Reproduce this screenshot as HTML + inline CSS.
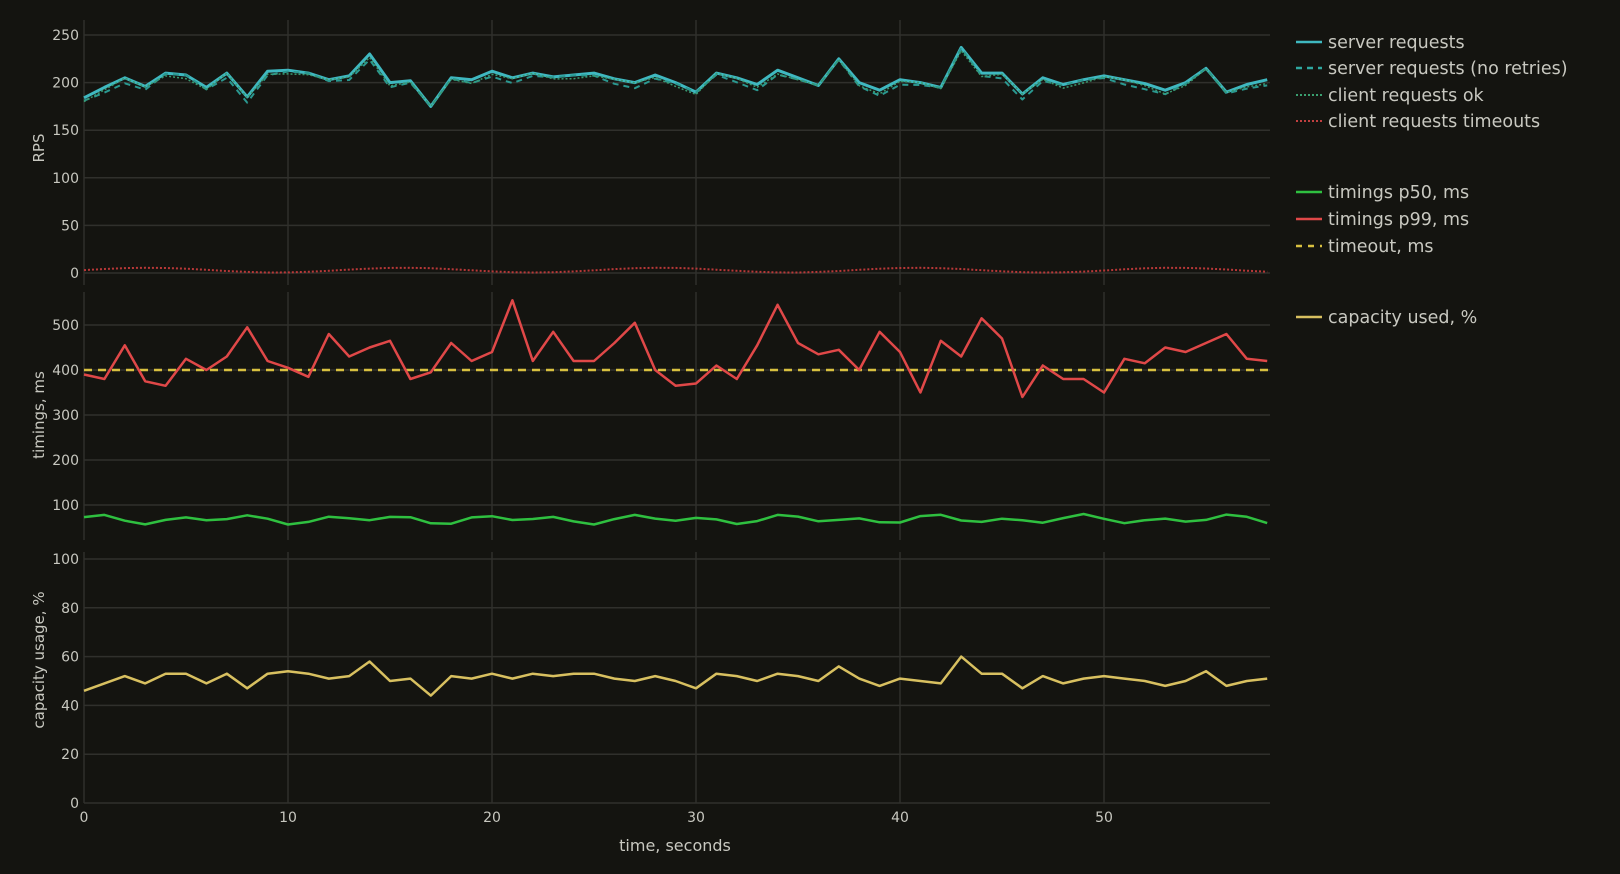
<!DOCTYPE html>
<html><head><meta charset="utf-8"><style>
html,body{margin:0;padding:0;background:#141410;}
svg{display:block}
text{font-family:"DejaVu Sans","Liberation Sans",sans-serif;fill:#c8c8c0;}
</style></head><body>
<svg id="s" width="1620" height="874" viewBox="0 0 1620 874" xmlns="http://www.w3.org/2000/svg">
<rect width="1620" height="874" fill="#141410"/>
<g id="g"></g>
<g font-size="17.5">
<line x1="1296" y1="42" x2="1322" y2="42" stroke="#3fb8c0" stroke-width="2.5"/><text x="1328" y="48">server requests</text>
<line x1="1296" y1="68" x2="1322" y2="68" stroke="#2fa8a0" stroke-width="2.5" stroke-dasharray="6,5"/><text x="1328" y="74">server requests (no retries)</text>
<line x1="1296" y1="95" x2="1322" y2="95" stroke="#3aa070" stroke-width="2" stroke-dasharray="2,2"/><text x="1328" y="101">client requests ok</text>
<line x1="1296" y1="121" x2="1322" y2="121" stroke="#c04040" stroke-width="2" stroke-dasharray="2,2"/><text x="1328" y="127">client requests timeouts</text>
<line x1="1296" y1="192" x2="1322" y2="192" stroke="#2fc040" stroke-width="2.5"/><text x="1328" y="198">timings p50, ms</text>
<line x1="1296" y1="219" x2="1322" y2="219" stroke="#e04848" stroke-width="2.5"/><text x="1328" y="225">timings p99, ms</text>
<line x1="1296" y1="246" x2="1322" y2="246" stroke="#d8c040" stroke-width="2.5" stroke-dasharray="6,6"/><text x="1328" y="252">timeout, ms</text>
<line x1="1296" y1="317" x2="1322" y2="317" stroke="#d8c060" stroke-width="2.5"/><text x="1328" y="323">capacity used, %</text>
</g>
</svg>
<script>
var NS="http://www.w3.org/2000/svg",g=document.getElementById("g");
function el(t,a,txt){var e=document.createElementNS(NS,t);for(var k in a)e.setAttribute(k,a[k]);if(txt!=null)e.textContent=txt;g.appendChild(e);return e;}
function X(t){return 84+20.4*t;}
var R=1270;
function panel(top,bot,ticks,yf,label,ly){
  for(var t=0;t<=50;t+=10)el("line",{x1:X(t),x2:X(t),y1:top,y2:bot,stroke:"#2e2e2a","stroke-width":1.5});
  ticks.forEach(function(v){var y=yf(v);el("line",{x1:84,x2:R,y1:y,y2:y,stroke:"#30302c","stroke-width":1.5});
    el("text",{x:79,y:y+5,"font-size":"14","text-anchor":"end"},v);});
  el("text",{x:0,y:0,"font-size":"15","text-anchor":"middle",transform:"translate(44,"+ly+") rotate(-90)"},label);
}
function yR(v){return 273-v*0.952;}
function yT(v){return 550-v*0.45;}
function yC(v){return 803-v*2.44;}
panel(20,285,[0,50,100,150,200,250],yR,"RPS",148);
panel(292,540,[100,200,300,400,500],yT,"timings, ms",415);
panel(552,803,[0,20,40,60,80,100],yC,"capacity usage, %",660);
for(var t=0;t<=50;t+=10)el("text",{x:X(t),y:822,"font-size":"14","text-anchor":"middle"},t);
el("text",{x:675,y:851,"font-size":"16","text-anchor":"middle"},"time, seconds");
function path(arr,yf,a){var d="";arr.forEach(function(v,i){d+=(i?"L":"M")+X(i).toFixed(1)+" "+yf(v).toFixed(1);});a.d=d;a.fill="none";a["stroke-linejoin"]="round";el("path",a);}
var rps=[184,195,205,196,210,208,195,210,185,212,213,210,203,207,230,200,202,175,205,203,212,205,210,206,208,210,204,200,208,200,190,210,205,198,213,205,197,225,200,192,203,200,195,237,210,210,188,205,198,203,207,203,199,192,200,215,190,198,203];
var p99=[390,380,455,375,365,425,400,430,495,420,405,385,480,430,450,465,380,395,460,420,440,555,420,485,420,420,460,505,400,365,370,410,380,455,545,460,435,445,400,485,440,350,465,430,515,470,340,410,380,380,350,425,415,450,440,460,480,425,420];
var cap=[46,49,52,49,53,53,49,53,47,53,54,53,51,52,58,50,51,44,52,51,53,51,53,52,53,53,51,50,52,50,47,53,52,50,53,52,50,56,51,48,51,50,49,60,53,53,47,52,49,51,52,51,50,48,50,54,48,50,51];
var p50=[],to=[],nr=[],ok=[];
for(var i=0;i<59;i++){p50.push(68+7*Math.sin(i*1.7)+5*Math.cos(i*0.9));to.push(3+2.5*Math.sin(i*0.5));nr.push(rps[i]-3-3*Math.sin(i));ok.push(rps[i]-2-2*Math.cos(i*1.3));}
path(to,yR,{stroke:"#b83838","stroke-width":2,"stroke-dasharray":"2,2"});
path(rps,yR,{stroke:"#3fb8c0","stroke-width":3});
path(nr,yR,{stroke:"#2a9890","stroke-width":2,"stroke-dasharray":"6,5"});
path(ok,yR,{stroke:"#3a9a70","stroke-width":1.5,"stroke-dasharray":"2,2"});
el("line",{x1:84,x2:R,y1:yT(400),y2:yT(400),stroke:"#d8c040","stroke-width":2.5,"stroke-dasharray":"8,6"});
path(p99,yT,{stroke:"#e04848","stroke-width":2.5});
path(p50,yT,{stroke:"#2fc040","stroke-width":2.5});
path(cap,yC,{stroke:"#d8c060","stroke-width":2.5});
</script>
</body></html>
